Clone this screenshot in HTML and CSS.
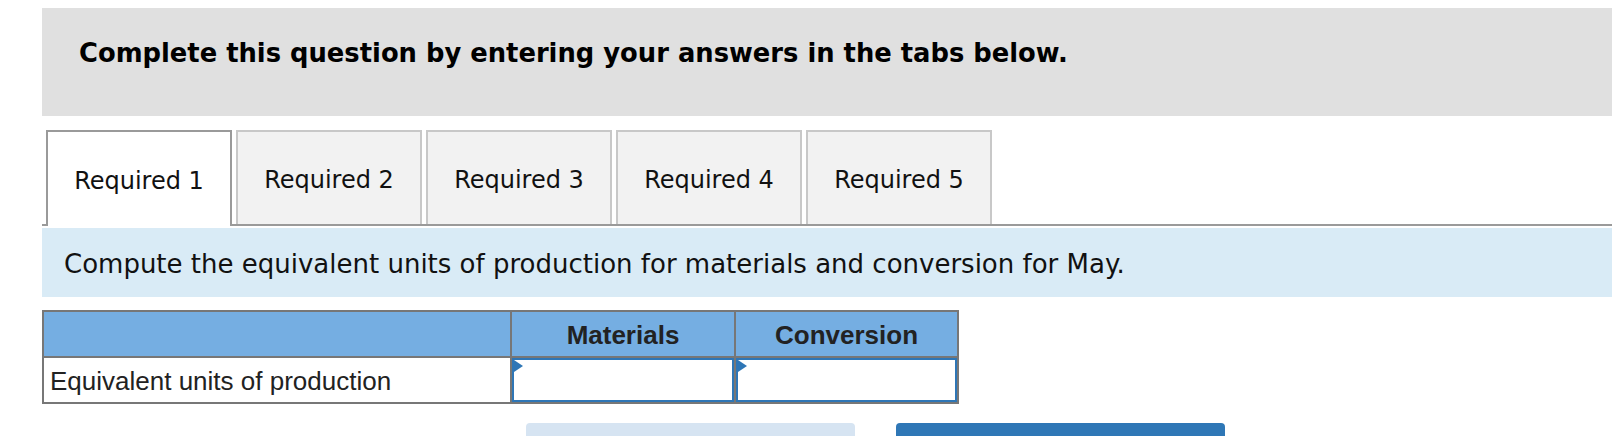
FILE: index.html
```html
<!DOCTYPE html>
<html lang="en">
<head>
<meta charset="utf-8">
<title>Equivalent units</title>
<link rel="stylesheet" href="styles.css">
</head>
<body>
<div class="page">
  <div class="banner">
    <h1 class="banner-title">Complete this question by entering your answers in the tabs below.</h1>
  </div>

  <div class="tabs">
    <div class="tab active">Required 1</div>
    <div class="tab">Required 2</div>
    <div class="tab">Required 3</div>
    <div class="tab">Required 4</div>
    <div class="tab">Required 5</div>
  </div>

  <div class="prompt">Compute the equivalent units of production for materials and conversion for May.</div>

  <div class="grid">
    <div class="cell head"></div>
    <div class="cell head center">Materials</div>
    <div class="cell head center">Conversion</div>
    <div class="cell label">Equivalent units of production</div>
    <div class="cell input"><span class="flag"></span></div>
    <div class="cell input"><span class="flag"></span></div>
  </div>

  <div class="actions">
    <div class="btn btn-light"></div>
    <div class="btn btn-dark"></div>
  </div>
</div>
</body>
</html>
```

FILE: styles.css
```css
html, body {
  margin: 0;
  padding: 0;
  background: #fff;
  overflow: hidden;
}

.page {
  padding-top: 8px;
  padding-left: 42px;
  font-family: "DejaVu Sans", Verdana, sans-serif;
  color: #111;
}

.banner {
  height: 108px;
  background: #e0e0e0;
  box-sizing: border-box;
  padding: 30px 0 0 37px;
}

.banner-title {
  margin: 0;
  font-size: 25.8px;
  line-height: 31px;
  font-weight: bold;
  color: #000;
}

.tabs {
  display: flex;
  align-items: flex-end;
  gap: 4px;
  padding-left: 4px;
  margin-top: 14px;
  border-bottom: 2px solid #9a9a9a;
}

.tab {
  width: 186px;
  height: 94px;
  box-sizing: border-box;
  border: 2px solid #c8c8c8;
  border-bottom: none;
  padding-top: 4px;
  background: #f2f2f2;
  display: flex;
  align-items: center;
  justify-content: center;
  font-size: 24px;
  color: #111;
}

.tab.active {
  background: #fff;
  border-color: #9a9a9a;
  height: 96px;
  margin-bottom: -2px;
}

.prompt {
  margin-top: 2px;
  height: 69px;
  box-sizing: border-box;
  padding-left: 22px;
  padding-top: 2px;
  background: #d9ebf6;
  display: flex;
  align-items: center;
  font-size: 26px;
  color: #111;
}

.grid {
  margin-top: 13px;
  display: grid;
  grid-template-columns: 466px 222px 221px;
  grid-template-rows: 44px 44px;
  gap: 2px;
  background: #777;
  border: 2px solid #777;
  width: fit-content;
  font-family: "Liberation Sans", Arial, sans-serif;
  font-size: 26px;
  color: #222;
}

.cell {
  display: flex;
  align-items: center;
  background: #fff;
  box-sizing: border-box;
  padding-top: 3px;
}

.cell.head {
  background: #75aee2;
  font-weight: bold;
}

.cell.center {
  justify-content: center;
}

.cell.label {
  padding-left: 6px;
}

.cell.input {
  position: relative;
  border: 2px solid #2e76b6;
  padding-top: 0;
}

.flag {
  position: absolute;
  left: 0;
  top: 0;
  width: 0;
  height: 0;
  border-left: 9px solid #2e76b6;
  border-top: 6px solid transparent;
  border-bottom: 6px solid transparent;
}

.actions {
  display: flex;
  gap: 41px;
  margin-top: 19px;
  padding-left: 484px;
}

.btn {
  width: 329px;
  height: 40px;
  border-radius: 4px 4px 0 0;
}

.btn-light {
  background: #d6e4f2;
}

.btn-dark {
  background: #2f77b6;
}
```
